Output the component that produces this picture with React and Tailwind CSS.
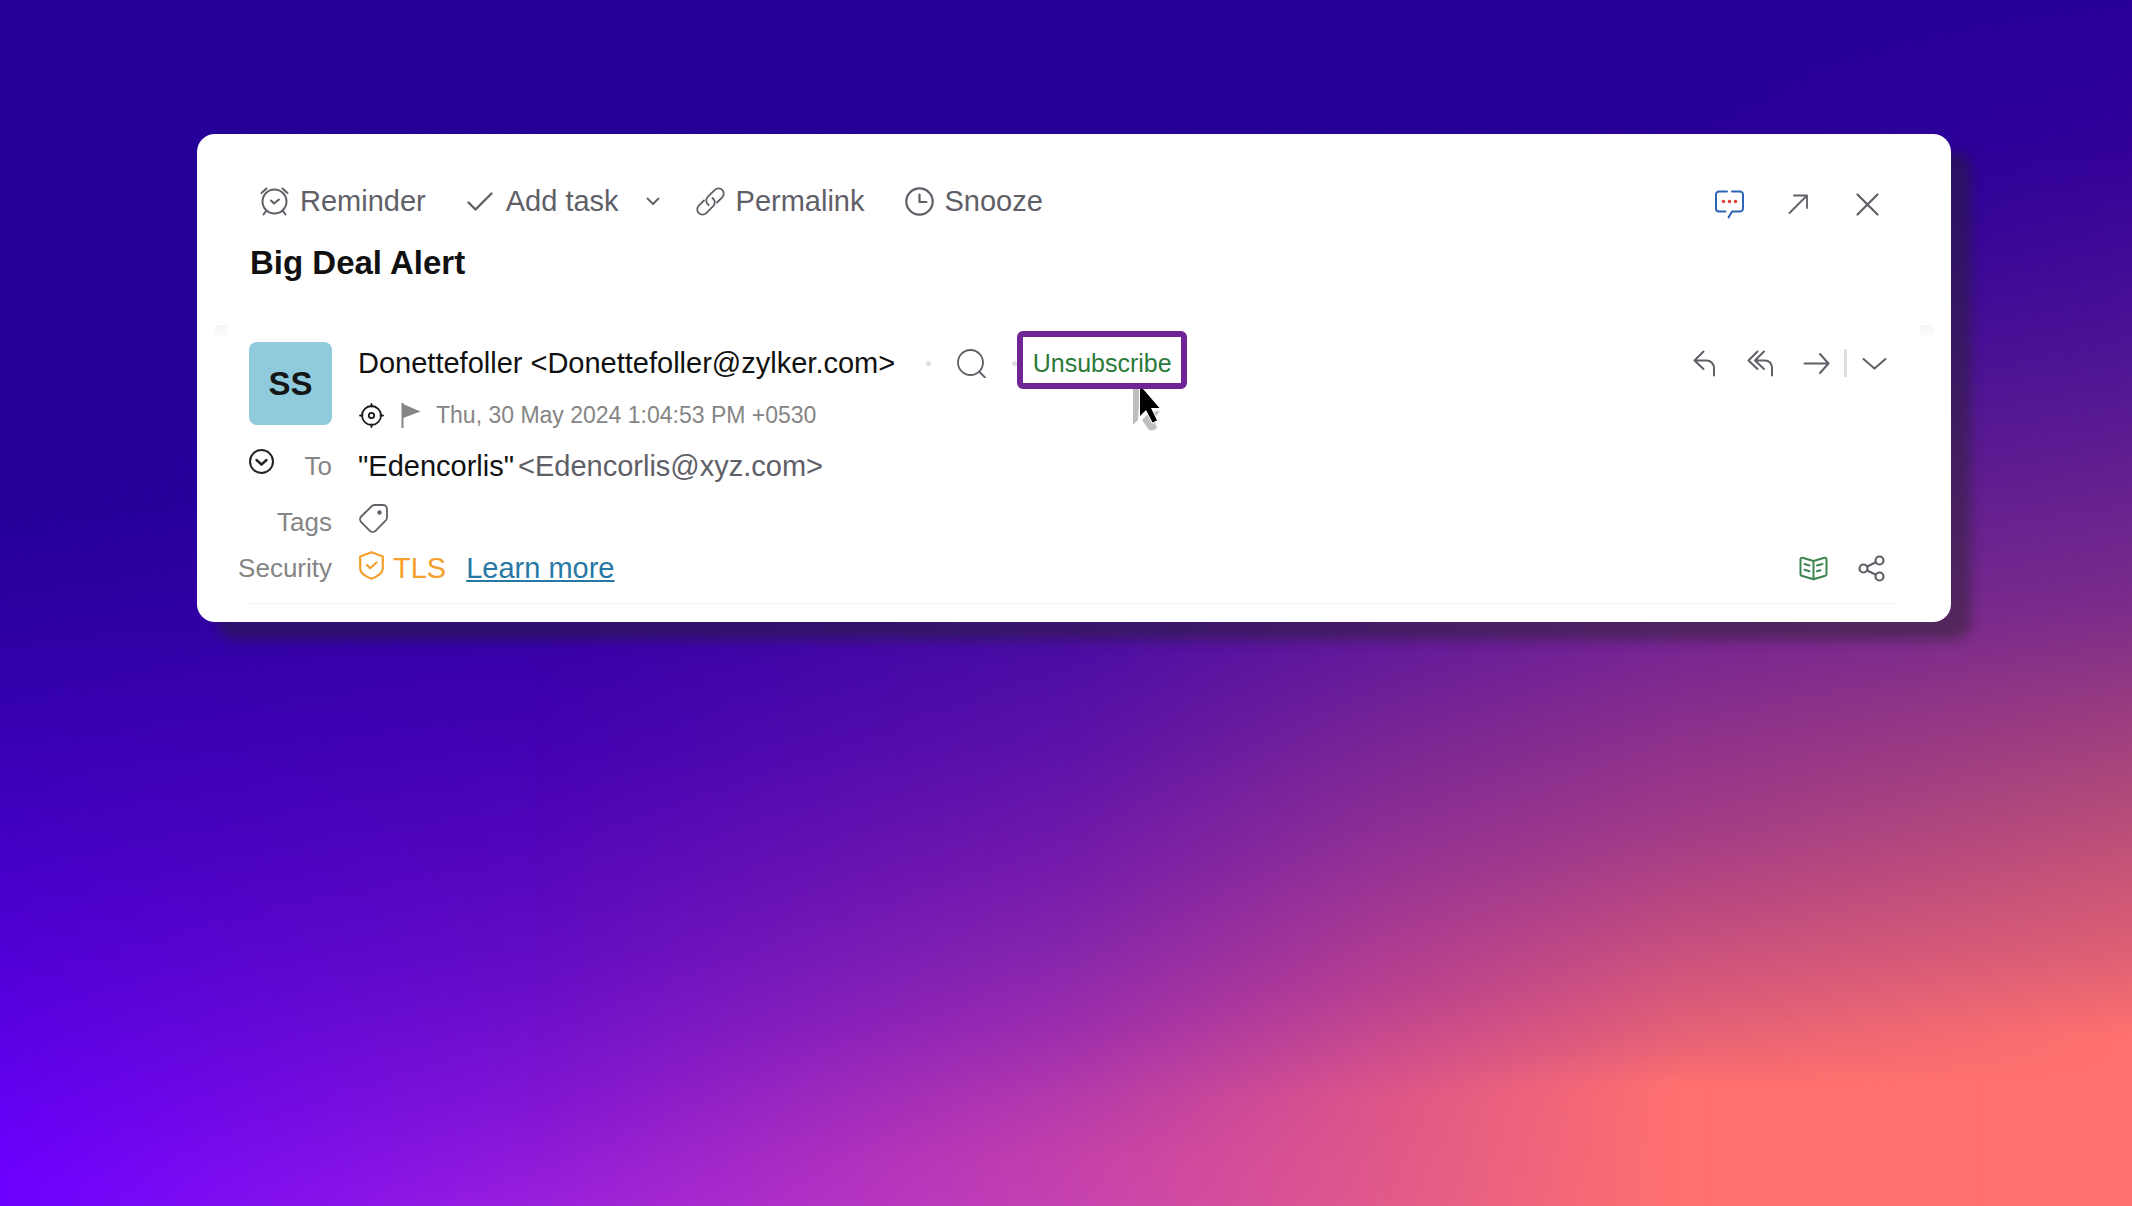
const iconBase = {
  fill: "none",
  stroke: "currentColor",
  strokeWidth: 2,
  strokeLinecap: "round",
  strokeLinejoin: "round",
  "aria-hidden": true,
};

const Icon = ({ children, className = "size-[29px]", viewBox = "0 0 29 29", ...rest }) => (
  <svg viewBox={viewBox} className={`shrink-0 ${className}`} {...iconBase} {...rest}>
    {children}
  </svg>
);

const AlarmIcon = () => (
  <Icon>
    <circle cx="14.5" cy="14.5" r="12" />
    <path d="M11 13.5l3 3 5-4M1.5 6l5-4.5M27.5 6l-5-4.5M6 24l-2.5 3.5M23 24l2.5 3.5" />
  </Icon>
);

const CheckIcon = () => (
  <Icon>
    <path d="M2.5 15.5l7 7L25.5 6.5" strokeWidth="2.4" />
  </Icon>
);

const LinkIcon = () => (
  <Icon strokeWidth="1.8">
    <path d="M8 13.5L2.8 18.7a5.2 5.2 0 0 0 7.4 7.4l7-7a5.2 5.2 0 0 0 0-7.4l-.8-.7" />
    <path d="M21 15.5l5.2-5.2a5.2 5.2 0 0 0-7.4-7.4l-7 7a5.2 5.2 0 0 0 0 7.4l.8.7" />
  </Icon>
);

const ClockIcon = () => (
  <Icon strokeWidth="2.2">
    <circle cx="14.5" cy="14.5" r="13.2" />
    <path d="M14.5 7.5v7.5h7" />
  </Icon>
);

const ChatIcon = () => (
  <Icon className="size-[29px] text-[#2b63b5]">
    <path d="M12 1.5H4a3 3 0 0 0-3 3v14a3 3 0 0 0 3 3h6.5M17 1.5h8a3 3 0 0 1 3 3v14a3 3 0 0 1-3 3h-8l-3.5 6" />
    <g fill="#e23b30" stroke="none">
      <circle cx="8.5" cy="11.5" r="1.7" />
      <circle cx="14.5" cy="11.5" r="1.7" />
      <circle cx="20.5" cy="11.5" r="1.7" />
    </g>
  </Icon>
);

const OpenIcon = () => (
  <Icon strokeWidth="1.8">
    <path d="M5.5 23L22.5 6M10 5.5h13v12.5" />
  </Icon>
);

const CloseIcon = () => (
  <Icon strokeWidth="2.2">
    <path d="M4.5 4.5l20 20M24.5 4.5l-20 20" />
  </Icon>
);

const SearchIcon = () => (
  <Icon strokeWidth="1.8">
    <circle cx="13.5" cy="13.5" r="12.5" />
    <path d="M22 22.5l6 6" />
  </Icon>
);

const ReplyIcon = () => (
  <Icon>
    <path d="M13.5 2.5L4.5 11.5l9 8.5M4.5 11.5h12a7.5 7.5 0 0 1 7.5 7.5v7.5" />
  </Icon>
);

const ReplyAllIcon = () => (
  <Icon>
    <path d="M11.5 2.5L2.5 11.5l9 8.5M18 2.5L9 11.5l9 8.5M9 11.5h10a7 7 0 0 1 7 7v8" />
  </Icon>
);

const ForwardIcon = () => (
  <Icon>
    <path d="M2.5 14.5h24M18 5l8.5 9.5L18 24" />
  </Icon>
);

const ChevronIcon = () => (
  <Icon>
    <path d="M3.5 10l11 9.5 11-9.5" />
  </Icon>
);

const TargetIcon = () => (
  <Icon className="size-[25px] text-[#1b1b1b]" viewBox="0 0 25 25" strokeWidth="1.8">
    <circle cx="12.5" cy="12.5" r="9.5" />
    <circle cx="12.5" cy="12.5" r="2.7" />
    <path d="M12.5 1v2.5M12.5 21.5V24M1 12.5h2.5M21.5 12.5H24" />
  </Icon>
);

const FlagIcon = () => (
  <Icon className="h-[25px] w-[20px] text-[#858585]" viewBox="0 0 20 25" strokeLinecap="butt">
    <path d="M1.5 0v25" />
    <path d="M2 1l17.5 7.5L2 15z" fill="currentColor" stroke="none" />
  </Icon>
);

const ExpandIcon = () => (
  <Icon className="size-[25px]" viewBox="0 0 25 25">
    <circle cx="12.5" cy="12.5" r="11.5" />
    <path d="M7.5 11l5 4.5 5-4.5" strokeWidth="2.4" />
  </Icon>
);

const TagIcon = () => (
  <Icon strokeWidth="1.8">
    <path d="M15.5 1h8.5a4 4 0 0 1 4 4v8.5a4 4 0 0 1-1.2 2.8L16.5 26.8a4 4 0 0 1-5.6 0L2.2 18.1a4 4 0 0 1 0-5.6L12.7 2.2A4 4 0 0 1 15.5 1z" />
    <circle cx="20.5" cy="8.5" r="2.2" fill="currentColor" stroke="none" />
  </Icon>
);

const ShieldIcon = () => (
  <Icon className="h-[29px] w-[25px]" viewBox="0 0 25 29" strokeWidth="2.2">
    <path d="M12.5 1.2L23.8 5.5v12c0 5-5.8 8.2-11.3 10.3C7 25.7 1.2 22.5 1.2 17.5v-12z" />
    <path d="M8 14l3.2 3.2L17.5 11.5" />
  </Icon>
);

const BookIcon = () => (
  <Icon className="size-[29px] text-[#3d8450]">
    <path d="M14.5 7L3.5 3.7a1.6 1.6 0 0 0-2 1.6v15a1.5 1.5 0 0 0 1.1 1.4l11.9 3.6 11.9-3.6a1.5 1.5 0 0 0 1.1-1.4v-15a1.6 1.6 0 0 0-2-1.6zM14.5 7v18M5.5 10l5 1.5M5.5 15.8l5 1.5M23.5 10l-5.5 1.5M21.5 16.3l-3.5 1" />
  </Icon>
);

const ShareIcon = () => (
  <Icon strokeWidth="2.2">
    <circle cx="6.5" cy="14.5" r="4" />
    <circle cx="22.5" cy="6.5" r="4" />
    <circle cx="22.5" cy="22.5" r="4" />
    <path d="M10.2 12.6l8.7-4.3M10.2 16.4l8.7 4.3" />
  </Icon>
);

const CursorIcon = () => (
  <svg
    viewBox="0 0 30 42"
    className="pointer-events-none absolute top-[58px] left-[116px] h-[42px] w-[30px]"
    aria-hidden="true"
  >
    <path d="M0 0v36l5-5 2-31zM9 31l8-8 10-1-4 5-2 4 3 8c-2 2-5 3-8 2z" fill="#bfbfbf" />
    <path
      d="M7 0v27l6-6 6.5 12.5 4.5-2-6-12.5h8.5L10 0z"
      fill="#000"
      stroke="#fff"
      strokeWidth="2"
      paintOrder="stroke"
    />
  </svg>
);

const IconButton = ({ label, children }) => (
  <button type="button" aria-label={label} title={label} className="shrink-0 cursor-pointer">
    {children}
  </button>
);

const ToolButton = ({ label, icon, className = "" }) => (
  <button type="button" className={`flex cursor-pointer items-center gap-[11px] ${className}`}>
    {icon}
    <span>{label}</span>
  </button>
);

const DetailRow = ({ label, lead, className, children }) => (
  <div className={`flex h-[40px] items-center gap-[26px] ${className}`}>
    <div className="flex w-[95px] shrink-0 items-center justify-end text-[26px] text-[#858585]">
      {lead}
      <span>{label}</span>
    </div>
    {children}
  </div>
);

// vertical gradients blended sideways, each one fading in over the column before it
const Backdrop = () => (
  <div className="absolute inset-0 -z-10 overflow-hidden">
    <div className="absolute inset-0 bg-[linear-gradient(to_bottom,#250099_0%,#250099_42%,#2d00a1_50%,#3600b0_59%,#4200c2_69%,#4b00cf_75%,#5900e2_85%,#6200f1_91%,#6c00ff_98%)]" />
    <div className="absolute inset-0 bg-[linear-gradient(to_bottom,#250099_0%,#260099_35%,#3700a8_53%,#4402b3_62%,#5607bc_72%,#620bc4_79%,#7010cc_85%,#8014d3_91%,#9a1fdd_100%)] mask-[linear-gradient(to_right,transparent_0%,black_25%)]" />
    <div className="absolute inset-0 bg-[linear-gradient(to_bottom,#250099_0%,#280099_30%,#4a0ca4_53%,#5c12a9_62%,#751bab_72%,#8726ac_79%,#9c2dad_85%,#b43aab_91%,#c440ab_96%,#c642b0_100%)] mask-[linear-gradient(to_right,transparent_25%,black_50%)]" />
    <div className="absolute inset-0 bg-[linear-gradient(to_bottom,#250099_0%,#290099_22%,#62199a_53%,#7a2695_62%,#973394_72%,#b84090_82%,#d04f8c_88%,#de5688_91%,#e25a8a_100%)] mask-[linear-gradient(to_right,transparent_50%,black_65%)]" />
    <div className="absolute inset-0 bg-[linear-gradient(to_bottom,#250099_0%,#2a0099_18%,#762592_53%,#90328b_62%,#a33c87_69%,#b94881_75%,#d5587b_82%,#eb6574_87%,#ff716e_90%)] mask-[linear-gradient(to_right,transparent_65%,black_79%)]" />
    <div className="absolute inset-0 bg-[linear-gradient(to_bottom,#280099_0%,#320099_12%,#4f1594_30%,#7a2c8a_50%,#9a3c80_59%,#b04a7a_66%,#c65477_72%,#dd6074_79%,#ff716e_86%)] mask-[linear-gradient(to_right,transparent_79%,black_100%)]" />
  </div>
);

const MessageCard = () => (
  <article className="rounded-[18px] bg-white pt-[49px] pb-[18px] text-[29px] leading-[36px] text-[#5f6067] shadow-[20px_18px_12px_rgba(38,36,38,0.45)]">
    <div className="flex items-center pr-[69px] pl-[63px]">
      <ToolButton label="Reminder" icon={<AlarmIcon />} />
      <ToolButton label="Add task" icon={<CheckIcon />} className="ml-10" />
      <button type="button" aria-label="Task options" className="ml-[27px] cursor-pointer">
        <Icon className="size-[14px]" viewBox="0 0 14 14" strokeWidth="1.8">
          <path d="M1.5 4.5L7 10l5.5-5.5" />
        </Icon>
      </button>
      <ToolButton label="Permalink" icon={<LinkIcon />} className="ml-9" />
      <ToolButton label="Snooze" icon={<ClockIcon />} className="ml-10" />
      <div className="ml-auto flex items-center gap-10 pt-[6px]">
        <IconButton label="Comments"><ChatIcon /></IconButton>
        <IconButton label="Open in new window"><OpenIcon /></IconButton>
        <IconButton label="Close"><CloseIcon /></IconButton>
      </div>
    </div>

    <h1 className="mt-[22px] pl-[53px] text-[33px] leading-[44px] font-bold text-[#111]">Big Deal Alert</h1>

    <hr className="mx-[52px] mt-[28px] border-[#fcfcfc]" />
    <div className="mt-[11px] -mb-2 flex justify-between px-[18px]">
      <span className="h-[14px] w-[13px] bg-linear-to-b from-[#f5f5f5] to-white" />
      <span className="h-[14px] w-[13px] bg-linear-to-b from-[#f5f5f5] to-white" />
    </div>

    <header className="flex items-start gap-[26px] pr-[62px] pl-[52px]">
      <div className="mt-[11px] flex size-[83px] shrink-0 items-center justify-center rounded-lg bg-[#90cbdd] text-[33px] font-bold text-[#161616]">
        SS
      </div>
      <div>
        <div className="flex h-[64px] items-center">
          <span className="whitespace-nowrap text-[#111]">Donettefoller &lt;Donettefoller@zylker.com&gt;</span>
          <span className="ml-[31px] size-[5px] rounded-full bg-[#dedede]" />
          <span className="mx-[26px] flex">
            <IconButton label="Search sender"><SearchIcon /></IconButton>
          </span>
          <span className="size-[5px] rounded-full bg-[#dedede]" />
          <div className="relative self-start">
            <button
              type="button"
              className="h-[58px] w-[170px] cursor-pointer rounded-md border-6 border-[#702594] pt-[6px] text-[25px] text-[#2c7a38]"
            >
              Unsubscribe
            </button>
            <CursorIcon />
          </div>
        </div>
        <div className="mt-[2px] flex items-center pl-px text-[23px] text-[#858585]">
          <TargetIcon />
          <span className="mr-[15px] ml-[17px]">
            <FlagIcon />
          </span>
          <time dateTime="2024-05-30T13:04:53+05:30">Thu, 30 May 2024 1:04:53 PM +0530</time>
        </div>
      </div>
      <div className="ml-auto flex h-[64px] items-center gap-[13px]">
        <div className="flex gap-[27px]">
          <IconButton label="Reply"><ReplyIcon /></IconButton>
          <IconButton label="Reply all"><ReplyAllIcon /></IconButton>
          <IconButton label="Forward"><ForwardIcon /></IconButton>
        </div>
        <span className="h-7 w-[3px] bg-[#dedede]" />
        <IconButton label="More actions"><ChevronIcon /></IconButton>
      </div>
    </header>

    <div className="pl-[40px]">
      <DetailRow
        label="To"
        className="mt-[13px]"
        lead={
          <button type="button" aria-label="Show details" className="mr-auto ml-3 cursor-pointer pb-[10px] text-[#222]">
            <ExpandIcon />
          </button>
        }
      >
        <p className="flex gap-1">
          <span className="text-[#111]">"Edencorlis"</span>
          <span>&lt;Edencorlis@xyz.com&gt;</span>
        </p>
      </DetailRow>
      <DetailRow label="Tags" className="mt-4">
        <div className="flex pb-2 pl-px">
          <IconButton label="Add tag"><TagIcon /></IconButton>
        </div>
      </DetailRow>
      <DetailRow label="Security" className="mt-[6px] pr-[65px]">
        <div className="flex items-center pl-px text-[#f5a02c]">
          <span className="mr-[9px] pb-[5px]">
            <ShieldIcon />
          </span>
          <span>TLS</span>
          <a href="#security" className="ml-5 text-[#2878a5] underline">Learn more</a>
        </div>
        <div className="ml-auto flex gap-[29px]">
          <IconButton label="Reader view"><BookIcon /></IconButton>
          <IconButton label="Share"><ShareIcon /></IconButton>
        </div>
      </DetailRow>
    </div>
    <hr className="mt-[15px] mr-[53px] ml-[52px] border-[#f4f4f4]" />
  </article>
);

const App = () => (
  <main className="relative isolate min-h-screen pt-[134px] pr-[181px] pl-[197px] font-['Liberation_Sans',Arial,sans-serif]">
    <Backdrop />
    <MessageCard />
  </main>
);

export default App;
